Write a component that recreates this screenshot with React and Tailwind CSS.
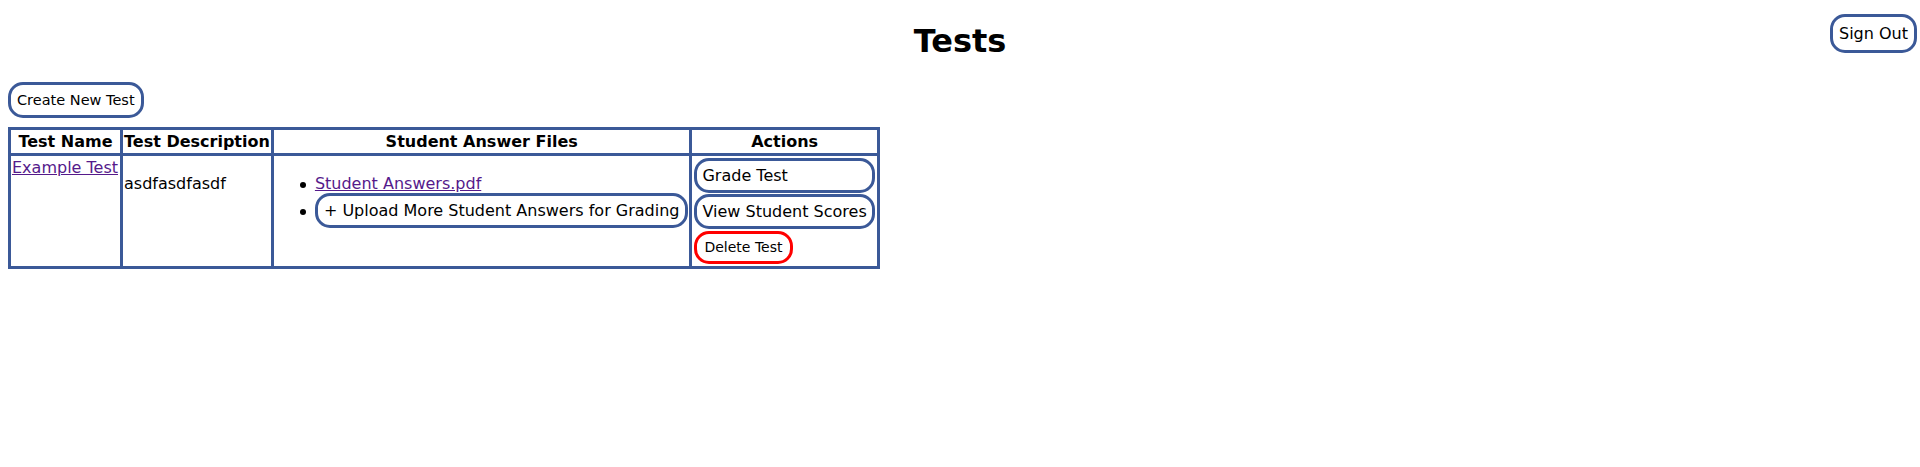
export default function App() {
  const blue = "border-[3px] border-[#3b5998] rounded-[15px] bg-white text-black";
  const cell = "border-[3px] border-[#3b5998]";

  return (
    <div className="min-h-screen bg-white font-['DejaVu_Sans','Verdana',sans-serif] text-black">
      <header className="grid grid-cols-[1fr_auto_1fr]">
        <div />
        <h1 className="mt-[23px] mb-[22px] text-[32px] font-bold leading-[37px]">Tests</h1>
        <div className="flex items-start justify-end pt-[14px] pr-[3px]">
          <button className={`${blue} px-[6px] py-[7px] text-[16px] leading-[19px]`}>Sign Out</button>
        </div>
      </header>

      <main className="px-2">
        <button className={`${blue} block px-[6px] py-[7px] text-[14.5px] leading-[16px]`}>
          Create New Test
        </button>

        <table className={`mt-[9px] border-collapse ${cell} text-[16px] leading-[19px]`}>
          <thead>
            <tr>
              <th className={`${cell} px-[2px] py-[2px] font-bold`}>Test Name</th>
              <th className={`${cell} px-px py-[2px] font-bold`}>Test Description</th>
              <th className={`${cell} px-px py-[2px] font-bold`}>Student Answer Files</th>
              <th className={`${cell} px-px py-[2px] font-bold`}>Actions</th>
            </tr>
          </thead>
          <tbody>
            <tr>
              <td className={`${cell} pl-px pr-[2px] pt-[2px] pb-px align-top`}>
                <a href="#" className="text-[#551a8b] underline">Example Test</a>
              </td>
              <td className={`${cell} p-px align-top`}>
                <p className="mt-[17px] mb-4">asdfasdfasdf</p>
              </td>
              <td className={`${cell} p-px align-top`}>
                <ul className="mt-[17px] mb-4 list-none pl-10">
                  <li>
                    <span className="-ml-[15px] mr-[9px] inline-block h-[6px] w-[6px] rounded-full bg-black align-middle" />
                    <a href="#" className="text-[#551a8b] underline">Student Answers.pdf</a>
                  </li>
                  <li>
                    <span className="-ml-[15px] mr-[9px] inline-block h-[6px] w-[6px] rounded-full bg-black align-middle" />
                    <button className={`${blue} px-[6px] py-[5px] text-[16px] leading-[19px]`}>
                      + Upload More Student Answers for Grading
                    </button>
                  </li>
                </ul>
              </td>
              <td className={`${cell} p-px align-top`}>
                <button className={`${blue} m-px block w-[calc(100%-2px)] px-[5px] py-[5px] text-left text-[16px] leading-[19px]`}>
                  Grade Test
                </button>
                <button className={`${blue} m-px block w-[calc(100%-2px)] px-[5px] py-[5px] text-left text-[16px] leading-[19px]`}>
                  View Student Scores
                </button>
                <div className="leading-none">
                  <button className="m-px rounded-[15px] border-[3px] border-[#ff0000] bg-white px-[7px] py-[6px] text-[14px] leading-[15px] text-black">
                    Delete Test
                  </button>
                </div>
              </td>
            </tr>
          </tbody>
        </table>
      </main>
    </div>
  );
}
